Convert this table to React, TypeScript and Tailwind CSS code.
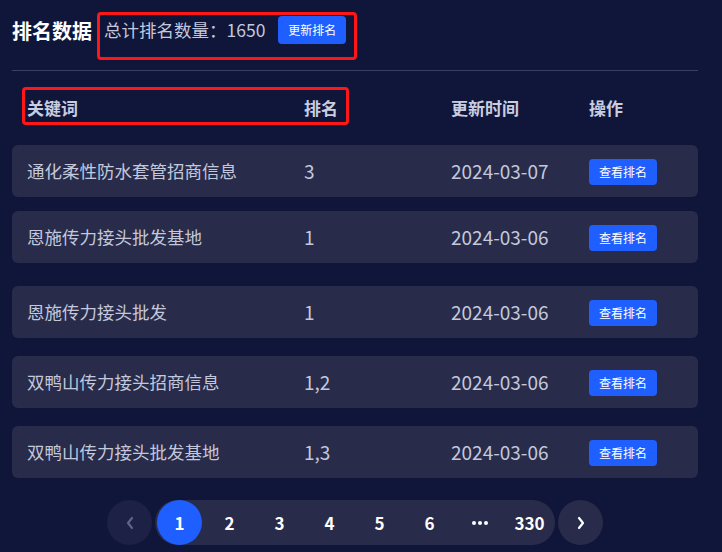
import React from "react";

const rows = [
  { kw: "通化柔性防水套管招商信息", rank: "3", date: "2024-03-07", mt: "mt-[20px]" },
  { kw: "恩施传力接头批发基地", rank: "1", date: "2024-03-06", mt: "mt-[14px]" },
  { kw: "恩施传力接头批发", rank: "1", date: "2024-03-06", mt: "mt-[23px]" },
  { kw: "双鸭山传力接头招商信息", rank: "1,2", date: "2024-03-06", mt: "mt-[18px]" },
  { kw: "双鸭山传力接头批发基地", rank: "1,3", date: "2024-03-06", mt: "mt-[18px]" },
];

const font = { fontFamily: '"Noto Sans CJK SC", "Noto Sans", sans-serif' };

export default function App() {
  return (
    <div
      className="w-[722px] h-[552px] overflow-hidden bg-[#10163a] pl-[12px] pr-[24px] pt-[12px]"
      style={font}
    >
      {/* Header */}
      <div className="flex items-start gap-[5px]">
        <div className="mt-[5px] h-[28px] leading-[28px] text-[20px] font-bold text-white">排名数据</div>
        <div className="border-[3px] border-[#ff1717] rounded-[4px] pl-[4px] pr-[8px] pt-[1px] pb-[13px]">
          <div className="flex items-center h-[28px] gap-[13px]">
            <span className="text-[17.5px] text-[#c3c8dc] leading-[28px]">总计排名数量：1650</span>
            <button className="h-[28px] px-[10px] rounded-[4px] bg-[#1f5fff] text-white text-[12px] leading-[28px]">
              更新排名
            </button>
          </div>
        </div>
      </div>

      <div className="mt-[10px] h-px bg-[#3b4060]" />

      {/* Table header */}
      <div className="relative mt-[16px] h-[38px]">
        <div className="grid grid-cols-[277px_147px_138px_1fr] pl-[15px] pt-[3px] h-full items-center text-[17px] font-bold text-[#c8cde0]">
          <div>关键词</div>
          <div>排名</div>
          <div>更新时间</div>
          <div>操作</div>
        </div>
        <div className="absolute left-[10px] top-0 w-[327px] h-[38px] border-[3px] border-[#ff1717] rounded-[4px]" />
      </div>

      {/* Rows */}
      {rows.map((r, i) => (
        <div
          key={i}
          className={`${r.mt} h-[52px] rounded-[6px] bg-[#282c4a] grid grid-cols-[277px_147px_138px_1fr] pl-[15px] items-center text-[#c3c8dc]`}
        >
          <div className="text-[17.5px]">{r.kw}</div>
          <div className="text-[19px]">{r.rank}</div>
          <div className="text-[19px]">{r.date}</div>
          <div>
            <button className="h-[26px] w-[68px] rounded-[4px] bg-[#1f5fff] text-white text-[12px] leading-[26px]">
              查看排名
            </button>
          </div>
        </div>
      ))}

      {/* Pagination */}
      <div className="mt-[22px] flex justify-center gap-[3px]">
        <button className="w-[45px] h-[45px] rounded-full bg-[#1c2145] flex items-center justify-center">
          <svg width="10" height="14" viewBox="0 0 10 14" fill="none">
            <path d="M7 2 L3 7 L7 12" stroke="#5f6584" strokeWidth="2.2" strokeLinecap="round" strokeLinejoin="round" />
          </svg>
        </button>
        <div className="h-[45px] rounded-full bg-[#282c4a] flex items-center gap-[5px] pl-[2px] pr-[3px]">
          <div className="w-[45px] h-[45px] rounded-full bg-[#1f5fff] flex items-center justify-center text-white font-bold text-[17px]">1</div>
          {["2", "3", "4", "5", "6"].map((n) => (
            <div key={n} className="w-[45px] h-[45px] flex items-center justify-center text-white font-bold text-[17px]">
              {n}
            </div>
          ))}
          <div className="w-[45px] h-[45px] flex items-center justify-center gap-[2px]">
            <span className="w-[4px] h-[4px] rounded-full bg-white" />
            <span className="w-[4px] h-[4px] rounded-full bg-white" />
            <span className="w-[4px] h-[4px] rounded-full bg-white" />
          </div>
          <div className="w-[45px] h-[45px] flex items-center justify-center text-white font-bold text-[17px]">330</div>
        </div>
        <button className="w-[45px] h-[45px] rounded-full bg-[#282c4a] flex items-center justify-center">
          <svg width="10" height="14" viewBox="0 0 10 14" fill="none">
            <path d="M3 2 L7 7 L3 12" stroke="#ffffff" strokeWidth="2.2" strokeLinecap="round" strokeLinejoin="round" />
          </svg>
        </button>
      </div>
    </div>
  );
}
